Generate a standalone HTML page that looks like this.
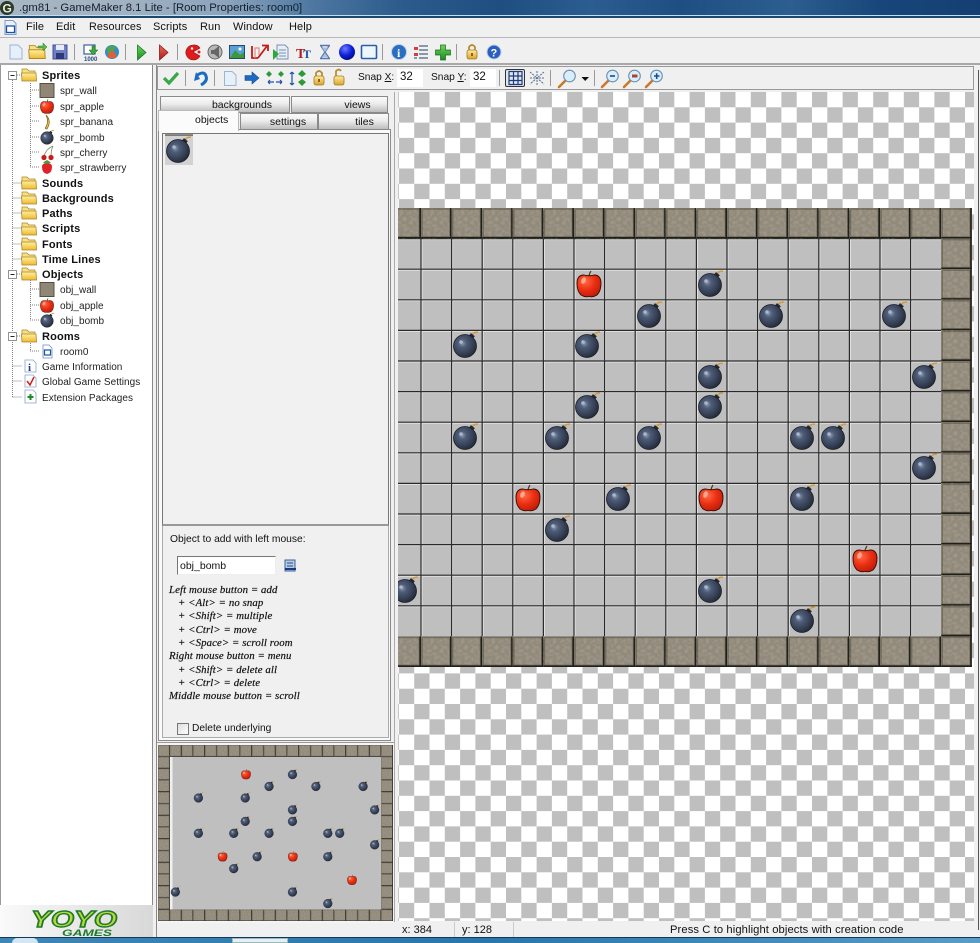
<!DOCTYPE html>
<html><head><meta charset="utf-8"><style>
html,body{margin:0;padding:0;background:#f0f0f0;overflow:hidden}
body{width:980px;height:943px;position:relative;font-family:"Liberation Sans",sans-serif;color:#111}
div,span.t{position:absolute}
.t{white-space:nowrap;font-size:11px;line-height:14px;transform:translateY(-7px)}
.m{font-size:11px;letter-spacing:.1px}
.s{font-family:"Liberation Serif",serif;font-style:italic;font-size:10.8px;letter-spacing:.1px;color:#111;-webkit-text-stroke:.2px #111;margin-top:1px}
.tab{box-sizing:border-box;border:1px solid #8a8a8a;background:linear-gradient(#fafafa,#ececec 45%,#bdbdbd);font-size:10.5px;text-align:center}
svg{position:absolute;left:0;top:0}
</style></head><body>
<div style="left:0;top:0;width:980px;height:17px;background:linear-gradient(90deg,#a9b6c3 0,#a3b2c2 120px,#8ba3bb 230px,#4f78a2 310px,#2c5b8c 400px,#1f4e80 500px,#2c5d90 590px,#1f4f82 680px,#2d5e90 790px,#18467a 880px,#153f73 980px)"></div>
<div style="left:0;top:15px;width:980px;height:1px;background:#bfe0f4"></div>
<div style="left:0;top:16px;width:980px;height:2px;background:#20466e"></div>
<span class="t" style="left:19px;top:8px;font-size:11.3px;color:#10202f">.gm81 - GameMaker 8.1 Lite - [Room Properties: room0]</span>
<div style="left:0;top:37px;width:980px;height:1px;background:#b8b8b8"></div>
<div style="left:0;top:63px;width:980px;height:2px;background:#a8a8a8"></div>
<span class="t m" style="left:26px;top:27px">File</span>
<span class="t m" style="left:56px;top:27px">Edit</span>
<span class="t m" style="left:89px;top:27px;font-size:10.8px">Resources</span>
<span class="t m" style="left:153px;top:27px">Scripts</span>
<span class="t m" style="left:200px;top:27px">Run</span>
<span class="t m" style="left:233px;top:27px">Window</span>
<span class="t m" style="left:289px;top:27px">Help</span>

<div style="left:0;top:65px;width:152px;height:840px;background:#fff;border-right:1px solid #888;box-shadow:inset 1px 0 0 #999"></div>
<div style="left:0;top:905px;width:153px;height:32px;background:linear-gradient(90deg,#fafafa,#d8d8d8)"></div>
<div style="left:156px;top:65px;width:1px;height:872px;background:#888"></div>
<div style="left:157px;top:66px;width:817px;height:24px;box-sizing:border-box;border:1px solid #999;background:#f0f0f0"></div>
<div style="left:397px;top:69px;width:26px;height:18px;background:#fff"></div>
<div style="left:470px;top:69px;width:26px;height:18px;background:#fff"></div>
<div style="left:505px;top:69px;width:20px;height:18px;box-sizing:border-box;border:1px solid #333;border-radius:2px;background:#dfe6ee"></div>
<span class="t" style="left:358px;top:78px;font-size:10.2px">Snap <u>X</u>:</span>
<span class="t" style="left:431px;top:78px;font-size:10.2px">Snap <u>Y</u>:</span>
<span class="t" style="left:400px;top:77px;font-size:11.5px">32</span>
<span class="t" style="left:473px;top:77px;font-size:11.5px">32</span>

<div class="tab" style="left:160px;top:96px;width:130px;height:17px;line-height:16px;padding-left:34px">backgrounds</div>
<div class="tab" style="left:291px;top:96px;width:97px;height:17px;line-height:16px;padding-left:36px">views</div>
<div class="tab" style="left:240px;top:113px;width:78px;height:17px;line-height:17px;padding-left:18px">settings</div>
<div class="tab" style="left:318px;top:113px;width:71px;height:17px;line-height:17px;padding-left:22px">tiles</div>
<div style="left:158px;top:129px;width:233px;height:612px;box-sizing:border-box;border:1px solid #8a8a8a;background:#fafafa"></div>
<div style="left:158px;top:110px;width:81px;height:21px;box-sizing:border-box;border:1px solid #bbb;border-bottom:0;background:#fbfbfb;font-size:10.5px;line-height:19px;padding-left:36px">objects</div>
<div style="left:162px;top:133px;width:227px;height:393px;box-sizing:border-box;border:1px solid #777;border-bottom:2px solid #999;background:#f1f1f1"></div>
<div style="left:162px;top:526px;width:227px;height:212px;box-sizing:border-box;border:1px solid #aaa;border-top:0;background:#f0f0f0"></div>
<div style="left:165px;top:135px;width:28px;height:30px;background:#d2d2d2"></div>

<span class="t" style="left:170px;top:540px;font-size:10.3px">Object to add with left mouse:</span>
<div style="left:177px;top:556px;width:99px;height:19px;box-sizing:border-box;border:1px solid #999;border-color:#777 #eee #eee #777;background:#fff;font-size:10.5px;line-height:19px;padding-left:2px">obj_bomb</div>
<span class="t s" style="left:169px;top:589px">Left mouse button = add</span>
<span class="t s" style="left:178px;top:602px">+ &lt;Alt&gt; = no snap</span>
<span class="t s" style="left:178px;top:615px">+ &lt;Shift&gt; = multiple</span>
<span class="t s" style="left:178px;top:629px">+ &lt;Ctrl&gt; = move</span>
<span class="t s" style="left:178px;top:642px">+ &lt;Space&gt; = scroll room</span>
<span class="t s" style="left:169px;top:655px">Right mouse button = menu</span>
<span class="t s" style="left:178px;top:669px">+ &lt;Shift&gt; = delete all</span>
<span class="t s" style="left:178px;top:682px">+ &lt;Ctrl&gt; = delete</span>
<span class="t s" style="left:169px;top:695px">Middle mouse button = scroll</span>
<div style="left:177px;top:723px;width:12px;height:12px;box-sizing:border-box;border:1px solid #777;background:linear-gradient(135deg,#ddd,#fff)"></div>
<span class="t" style="left:192px;top:729px;font-size:10.2px">Delete underlying</span>

<div style="left:157px;top:742px;width:237px;height:180px;background:#f4f4f4;border-top:1px solid #999"></div>
<div style="left:974px;top:65px;width:6px;height:872px;background:#f0f0f0"></div>
<div style="left:978px;top:70px;width:1px;height:860px;background:#555"></div>
<div style="left:394px;top:92px;width:1px;height:830px;background:#aaa"></div>
<span class="t" style="left:402px;top:930px;font-size:11px">x: 384</span>
<span class="t" style="left:462px;top:930px;font-size:11px">y: 128</span>
<span class="t" style="left:670px;top:930px;font-size:11.2px;letter-spacing:.1px">Press C to highlight objects with creation code</span>
<div style="left:454px;top:922px;width:1px;height:15px;background:#ccc"></div>
<div style="left:513px;top:922px;width:1px;height:15px;background:#ccc"></div>
<div style="left:0;top:937px;width:980px;height:6px;background:linear-gradient(90deg,#3f86b4,#2a76a8 50%,#5a9cc4)"></div>
<div style="left:0;top:937px;width:980px;height:1px;background:#10395c"></div>
<div style="left:232px;top:938px;width:56px;height:5px;background:#e8eef3;border:1px solid #9bb;box-sizing:border-box"></div>
<div style="left:12px;top:938px;width:26px;height:5px;background:#d4e6f2;border-radius:13px 13px 0 0"></div>

<svg width="980" height="943" viewBox="0 0 980 943" xmlns="http://www.w3.org/2000/svg">
<defs>
<pattern id="chk" patternUnits="userSpaceOnUse" x="383.6" y="92" width="30.6" height="30.6">
<rect width="30.6" height="30.6" fill="#fff"/><rect width="15.3" height="15.3" fill="#bfbfbf"/><rect x="15.3" y="15.3" width="15.3" height="15.3" fill="#bfbfbf"/>
</pattern>
<filter id="mott" x="0" y="0" width="100%" height="100%"><feTurbulence type="fractalNoise" baseFrequency=".3" numOctaves="2" seed="4"/><feColorMatrix values="0 0 0 0 .36  0 0 0 0 .33  0 0 0 0 .27  2.2 0 0 0 -.85"/></filter>
<radialGradient id="bg" cx=".38" cy=".38" r=".7"><stop offset="0" stop-color="#8c9bb2"/><stop offset=".25" stop-color="#4f5d78"/><stop offset=".7" stop-color="#333d52"/><stop offset="1" stop-color="#20262f"/></radialGradient>
<radialGradient id="ag" cx=".35" cy=".3" r=".8"><stop offset="0" stop-color="#ff6a44"/><stop offset=".5" stop-color="#ea2f12"/><stop offset="1" stop-color="#b81a08"/></radialGradient>
<radialGradient id="ball" cx=".38" cy=".3" r=".75"><stop offset="0" stop-color="#6e7cff"/><stop offset=".55" stop-color="#0f22d8"/><stop offset="1" stop-color="#000a80"/></radialGradient>
<linearGradient id="fold" x1="0" y1="0" x2="0" y2="1"><stop offset="0" stop-color="#fff0a0"/><stop offset="1" stop-color="#eeb92e"/></linearGradient>
<linearGradient id="lock" x1="0" y1="0" x2="0" y2="1"><stop offset="0" stop-color="#ffeaa0"/><stop offset="1" stop-color="#dca32c"/></linearGradient>
<linearGradient id="g3" x1="0" y1="0" x2="0" y2="1"><stop offset="0" stop-color="#6fd45c"/><stop offset="1" stop-color="#1a8c22"/></linearGradient>
<linearGradient id="r3" x1="0" y1="0" x2="0" y2="1"><stop offset="0" stop-color="#f06a5a"/><stop offset="1" stop-color="#a81d1d"/></linearGradient>

<g id="bomb">
<path d="M6 -10.5 L9.5 -13.5 L13 -14" fill="none" stroke="#d59a3e" stroke-width="1.6"/>
<rect x="3.5" y="-12" width="5" height="5" transform="rotate(40 6 -9)" fill="#22262e"/>
<circle r="11.5" cy="0" fill="url(#bg)" stroke="#1c2027" stroke-width=".8"/>
<circle cx="-4" cy="-4" r="1.8" fill="#b9c6d8" opacity=".8"/>
</g>
<g id="apple">
<path d="M0 -9 Q.5 -12 2 -14" fill="none" stroke="#5a3a14" stroke-width="1.3"/>
<path d="M-5 -10 Q0 -8.500 5 -10 Q12 -10 12 -1.500 Q12 6 8 10 Q4 12.500 0 11.500 Q-4 12.500 -8 10 Q-12 6 -12 -1.500 Q-12 -10 -5 -10Z" fill="url(#ag)" stroke="#3a0a04" stroke-width=".9"/>
<ellipse cx="-5.5" cy="-4.5" rx="2.2" ry="3.4" transform="rotate(22 -5.5 -4.5)" fill="#ffb49c" opacity=".85"/>
</g>
<g id="wall">
<rect width="30.6" height="30.6" fill="#91897a"/>
<rect width="30.6" height="30.6" filter="url(#mott)"/>
<rect x="1" y="1" width="28" height="28" fill="none" stroke="#5b5648" stroke-width="1.600" opacity=".6"/>
<rect x="29" width="1.600" height="30.6" fill="#1f1f1c"/>
<rect y="29" width="30.6" height="1.600" fill="#1f1f1c"/>
</g>
<g id="walls">
<use href="#wall" x="0"/><use href="#wall" x="30.6"/><use href="#wall" x="61.2"/><use href="#wall" x="91.8"/><use href="#wall" x="122.4"/><use href="#wall" x="153"/><use href="#wall" x="183.6"/><use href="#wall" x="214.2"/><use href="#wall" x="244.8"/><use href="#wall" x="275.4"/><use href="#wall" x="306"/><use href="#wall" x="336.6"/><use href="#wall" x="367.2"/><use href="#wall" x="397.8"/><use href="#wall" x="428.4"/><use href="#wall" x="459"/><use href="#wall" x="489.6"/><use href="#wall" x="520.2"/><use href="#wall" x="550.8"/>
<use href="#wall" y="428.4"/><use href="#wall" x="30.6" y="428.4"/><use href="#wall" x="61.2" y="428.4"/><use href="#wall" x="91.8" y="428.4"/><use href="#wall" x="122.4" y="428.4"/><use href="#wall" x="153" y="428.4"/><use href="#wall" x="183.6" y="428.4"/><use href="#wall" x="214.2" y="428.4"/><use href="#wall" x="244.8" y="428.4"/><use href="#wall" x="275.4" y="428.4"/><use href="#wall" x="306" y="428.4"/><use href="#wall" x="336.6" y="428.4"/><use href="#wall" x="367.2" y="428.4"/><use href="#wall" x="397.8" y="428.4"/><use href="#wall" x="428.4" y="428.4"/><use href="#wall" x="459" y="428.4"/><use href="#wall" x="489.6" y="428.4"/><use href="#wall" x="520.2" y="428.4"/><use href="#wall" x="550.8" y="428.4"/>
<use href="#wall" x="550.8" y="30.6"/><use href="#wall" x="550.8" y="61.2"/><use href="#wall" x="550.8" y="91.8"/><use href="#wall" x="550.8" y="122.4"/><use href="#wall" x="550.8" y="153"/><use href="#wall" x="550.8" y="183.6"/><use href="#wall" x="550.8" y="214.2"/><use href="#wall" x="550.8" y="244.8"/><use href="#wall" x="550.8" y="275.4"/><use href="#wall" x="550.8" y="306"/><use href="#wall" x="550.8" y="336.6"/><use href="#wall" x="550.8" y="367.2"/><use href="#wall" x="550.8" y="397.8"/>
</g>
<g id="items">
<use href="#apple" x="589" y="285"/><use href="#apple" x="528" y="499"/><use href="#apple" x="711" y="499"/><use href="#apple" x="865" y="560"/>
<use href="#bomb" x="710" y="285"/><use href="#bomb" x="649" y="316"/><use href="#bomb" x="771" y="316"/><use href="#bomb" x="894" y="316"/><use href="#bomb" x="465" y="346"/><use href="#bomb" x="587" y="346"/><use href="#bomb" x="710" y="377"/><use href="#bomb" x="924" y="377"/><use href="#bomb" x="587" y="407"/><use href="#bomb" x="710" y="407"/><use href="#bomb" x="465" y="438"/><use href="#bomb" x="557" y="438"/><use href="#bomb" x="649" y="438"/><use href="#bomb" x="802" y="438"/><use href="#bomb" x="833" y="438"/><use href="#bomb" x="924" y="468"/><use href="#bomb" x="618" y="499"/><use href="#bomb" x="802" y="499"/><use href="#bomb" x="557" y="530"/><use href="#bomb" x="710" y="591"/><use href="#bomb" x="802" y="621"/><use href="#bomb" x="405" y="591"/>
</g>
<clipPath id="cv"><rect x="398" y="92" width="576" height="829"/></clipPath>
<clipPath id="mm"><rect x="158" y="745" width="235" height="176"/></clipPath>
<g id="folder"><path d="M-7 -6 L-2 -6 L0 -4 L6 -4 L6 -1 L-7 -1Z" fill="#f8e080" stroke="#a8842c" stroke-width=".7"/><path d="M-7.500 -2 L7 -2 L7.500 6 L-7 6Z" fill="url(#fold)" stroke="#a8842c" stroke-width=".8"/></g>
<g id="minus"><rect x="-4" y="-4" width="8" height="8" fill="#fff" stroke="#888" stroke-width=".9"/><path d="M-2 0H2" stroke="#222" stroke-width="1"/></g>
<g id="wicon"><rect x="-7" y="-7" width="14" height="14" fill="#8f8676" stroke="#55503f"/></g>
<g id="padlock"><path d="M-3 -2 V-5 Q0 -9 3 -5 V-2" fill="none" stroke="#b58a2c" stroke-width="1.7"/><rect x="-5" y="-2" width="10" height="9" rx="2" fill="url(#lock)" stroke="#a47a20" stroke-width=".8"/><rect x="-1" y="1" width="2" height="3" fill="#8a6414"/></g>
<g id="mag"><path d="M-8 9 L-2 3" stroke="#c9792b" stroke-width="2.6" stroke-linecap="round"/><circle cx="2.5" cy="-2" r="5.8" fill="#d8eefa" stroke="#6a8fb0" stroke-width="1.1"/></g>
</defs>

<!-- canvas -->
<rect x="398" y="92" width="576" height="829" fill="url(#chk)"/>
<g clip-path="url(#cv)">
<rect x="390.4" y="208" width="581.4" height="459" fill="#bfbfbf"/>
<path d="M422 238V637M452.600 238V637M483.200 238V637M513.800 238V637M544.400 238V637M575 238V637M605.600 238V637M636.200 238V637M666.800 238V637M697.400 238V637M728 238V637M758.600 238V637M789.200 238V637M819.800 238V637M850.400 238V637M881 238V637M911.600 238V637M398 239.600H941M398 270.200H941M398 300.800H941M398 331.400H941M398 362H941M398 392.600H941M398 423.200H941M398 453.800H941M398 484.400H941M398 515H941M398 545.600H941M398 576.200H941M398 606.800H941" fill="none" stroke="#e4e4e4" stroke-width="1"/>
<path d="M421 238V637M451.600 238V637M482.200 238V637M512.800 238V637M543.400 238V637M574 238V637M604.600 238V637M635.200 238V637M665.800 238V637M696.400 238V637M727 238V637M757.600 238V637M788.200 238V637M818.800 238V637M849.400 238V637M880 238V637M910.600 238V637M398 238.600H941M398 269.200H941M398 299.800H941M398 330.400H941M398 361H941M398 391.600H941M398 422.200H941M398 452.800H941M398 483.400H941M398 514H941M398 544.600H941M398 575.200H941M398 605.800H941" fill="none" stroke="#2a2a2a" stroke-width="1.200"/>
<use href="#walls" x="390.4" y="208"/>
<use href="#items"/>
</g>
<!-- minimap -->
<g clip-path="url(#mm)">
<rect x="158" y="745" width="235" height="176" fill="#bfbfbf"/>
<rect x="170" y="745" width="2.5" height="176" fill="#f0f0f0"/>
<g transform="translate(158 745) scale(.384)">
<use href="#walls" x="30.6"/><use href="#wall" y="0"/><use href="#wall" y="30.6"/><use href="#wall" y="61.2"/><use href="#wall" y="91.8"/><use href="#wall" y="122.4"/><use href="#wall" y="153"/><use href="#wall" y="183.6"/><use href="#wall" y="214.2"/><use href="#wall" y="244.8"/><use href="#wall" y="275.4"/><use href="#wall" y="306"/><use href="#wall" y="336.6"/><use href="#wall" y="367.2"/><use href="#wall" y="397.8"/><use href="#wall" y="428.4"/>
<use href="#items" transform="translate(-359.8 -208)"/>
</g></g>
<!-- list thumb -->
<use href="#bomb" x="178" y="151"/>
<path d="M165 135H193" stroke="#222" stroke-width="1"/>

<!-- tree lines -->
<g stroke="#808080" stroke-width="1" stroke-dasharray="1 1" fill="none">
<path d="M12.5 80V397M30.5 83V167M30.5 280V320M30.5 341V351M12.5 183H22M12.5 198H22M12.5 213H22M12.5 228H22M12.5 244H22M12.5 259H22M12.5 366H22M12.5 381H22M12.5 397H22M30 90H40M30 106H40M30 121H40M30 137H40M30 152H40M30 167H40M30 289H40M30 305H40M30 320H40M30 351H40M17 75H22M17 274H22M17 336H22"/>
</g>
<use href="#minus" x="12.5" y="75.5"/><use href="#minus" x="12.5" y="274.5"/><use href="#minus" x="12.5" y="336.5"/>
<use href="#folder" x="29" y="75"/><use href="#folder" x="29" y="183"/><use href="#folder" x="29" y="198"/><use href="#folder" x="29" y="213"/><use href="#folder" x="29" y="229"/><use href="#folder" x="29" y="244"/><use href="#folder" x="29" y="259"/><use href="#folder" x="29" y="274"/><use href="#folder" x="29" y="336"/>
<use href="#wicon" x="47" y="90.5"/><use href="#wicon" x="47" y="289.5"/>
<g transform="translate(47 107) scale(.55)"><use href="#apple"/></g>
<g transform="translate(47 306) scale(.55)"><use href="#apple"/></g>
<g transform="translate(47 138) scale(.55)"><use href="#bomb"/></g>
<g transform="translate(47 321) scale(.55)"><use href="#bomb"/></g>
<path d="M46 115 Q52 121 47 129 Q44 129 46 127 Q49 121 46 115Z" fill="#e9c54a" stroke="#7a5a10" stroke-width=".7"/>
<path d="M44 156Q46 149 53 146M51 156Q51 150 53 146" fill="none" stroke="#7a8a50" stroke-width=".8"/><circle cx="44" cy="157.500" r="2.600" fill="#c91d1d"/><circle cx="51" cy="157.500" r="2.600" fill="#c91d1d"/>
<path d="M47 174 Q42 173 42 167 Q42 163 47 163 Q52 163 52 167 Q52 173 47 174Z" fill="#e0222a"/><path d="M43 162.500 L47 164 L51 162.500 L47 160Z" fill="#4a9a3a"/>
<path d="M43 345H49L52 348V358H43Z" fill="#fff" stroke="#6f8fbf" stroke-width=".8"/><rect x="44.500" y="350" width="6" height="5" fill="#fff" stroke="#1d50a8" stroke-width="1.2"/>
<path d="M25 360H33L36 363V372H25Z" fill="#fff" stroke="#8aa3c4" stroke-width=".8"/><text x="28" y="371" font-family="Liberation Serif,serif" font-weight="bold" font-size="11" fill="#1a3aa0">i</text>
<path d="M25 375H33L36 378V387H25Z" fill="#fff" stroke="#8aa3c4" stroke-width=".8"/><path d="M27 381L30 385L34 377" fill="none" stroke="#d02020" stroke-width="1.500"/>
<path d="M25 390H33L36 393V403H25Z" fill="#fff" stroke="#8aa3c4" stroke-width=".8"/><path d="M30.500 394V400M27.500 397H33.500" stroke="#1a8c22" stroke-width="2"/>
<g font-family="Liberation Sans,sans-serif" font-size="10" fill="#222" letter-spacing=".02">
<text x="60" y="94">spr_wall</text><text x="60" y="110">spr_apple</text><text x="60" y="125">spr_banana</text><text x="60" y="141">spr_bomb</text><text x="60" y="156">spr_cherry</text><text x="60" y="171">spr_strawberry</text>
<text x="60" y="293">obj_wall</text><text x="60" y="309">obj_apple</text><text x="60" y="324">obj_bomb</text><text x="60" y="355">room0</text>
<text x="42" y="370">Game Information</text><text x="42" y="385">Global Game Settings</text><text x="42" y="401">Extension Packages</text>
</g>
<g font-family="Liberation Sans,sans-serif" font-size="11" font-weight="bold" fill="#111" letter-spacing=".15">
<text x="42" y="79">Sprites</text><text x="42" y="187">Sounds</text><text x="42" y="202">Backgrounds</text><text x="42" y="217">Paths</text><text x="42" y="232">Scripts</text><text x="42" y="248">Fonts</text><text x="42" y="263">Time Lines</text><text x="42" y="278">Objects</text><text x="42" y="340">Rooms</text>
</g>

<!-- title icon -->
<circle cx="7" cy="8" r="7" fill="#2c3a2c"/><text x="2.500" y="12.500" font-family="Liberation Sans,sans-serif" font-weight="bold" font-size="12" fill="#e8f0d8">G</text>
<path d="M5 20.500H13L16 23.500V34.500H5Z" fill="#e8f0fa" stroke="#7c9cc4"/><rect x="6.500" y="26" width="8" height="6.500" fill="#fff" stroke="#1d50a8" stroke-width="1.300"/>

<!-- main toolbar -->
<path d="M10 45H18L22 49V59H10Z" fill="#e6f0fb" stroke="#9db5d2"/>
<use href="#folder" transform="translate(37 52) scale(1.100)"/><path d="M38 46L43 46V43L47 47L43 51V48H38Z" fill="#5cb84a" stroke="#2a7a22" stroke-width=".5"/>
<path d="M53 45H67V59H53Z" fill="#6c7fc8" stroke="#444f8c"/><rect x="56" y="45" width="8" height="5" fill="#e8ecf8"/><rect x="56" y="53" width="8" height="6" fill="#2e3a78"/>
<rect x="74" y="44" width="1" height="16" fill="#999"/>
<rect x="84" y="45" width="11" height="9" fill="#fff" stroke="#3a5f9a" stroke-width="1.200"/><path d="M92 46V50H89L93 55L98 50H95V46Z" fill="#3aa83a" stroke="#1c6a1c" stroke-width=".5"/><text x="84" y="61" font-family="Liberation Sans,sans-serif" font-size="6" font-weight="bold" fill="#2a4a7a">1000</text>
<circle cx="112" cy="52" r="7" fill="#3a8ac4"/><path d="M107 48Q112 44 116 47L113 52L108 53Z" fill="#4aa84a"/><path d="M108 54L112 50L116 54V58H108Z" fill="#d8623a"/>
<rect x="125" y="44" width="1" height="16" fill="#999"/>
<path d="M137.500 45L146 52.500L137.500 60Z" fill="url(#g3)" stroke="#1a7a22" stroke-width=".8"/>
<path d="M159.500 45L168 52.500L159.500 60Z" fill="url(#r3)" stroke="#8a1a1a" stroke-width=".8"/>
<rect x="177" y="44" width="1" height="16" fill="#999"/>
<path d="M193 45A7.500 7.500 0 1 0 200 56L193 52L200 48A7.500 7.500 0 0 0 193 45Z" fill="#e11b1b" stroke="#8a0f0f" stroke-width=".6"/><circle cx="199" cy="52" r="1.500" fill="#e11b1b"/><circle cx="192" cy="48.500" r="1.200" fill="#fff"/>
<circle cx="215" cy="52" r="7" fill="#b8b8b8" stroke="#666"/><path d="M211 50H214L219 46V58L214 54H211Z" fill="#666"/>
<rect x="229.500" y="45.500" width="15" height="13" fill="#5aa0d8" stroke="#2a4a6a"/><path d="M230 58L235 50L240 55L244 52V58Z" fill="#3a9a3a"/><circle cx="240" cy="49" r="1.500" fill="#fff"/>
<path d="M252 46V58H258M258 58L267 46M262 45.500H268V51" fill="none" stroke="#c41c1c" stroke-width="1.800"/><path d="M255 58V48H259V55" fill="none" stroke="#e08a8a" stroke-width="1.200"/>
<path d="M277 45H285L288 48V59H277Z" fill="#e8eef6" stroke="#7d8fb0"/><path d="M279 50H286M279 53H286M279 56H286" stroke="#7d8fb0"/><path d="M273 49L279 54L273 60Z" fill="#2aa83a"/>
<text x="296" y="58" font-family="Liberation Serif,serif" font-weight="bold" font-size="14" fill="#b01c1c">T</text><text x="303" y="58" font-family="Liberation Serif,serif" font-weight="bold" font-size="12" fill="#1d50a8">T</text>
<path d="M320 45.500H330M320 58.500H330M321 46L329 58M329 46L321 58" fill="none" stroke="#5a78b0" stroke-width="1.400"/><path d="M322 47.500H328L325 52Z M325 53L328 57H322Z" fill="#a8c0e0"/>
<circle cx="347" cy="52" r="8" fill="url(#ball)"/>
<rect x="361.500" y="45.500" width="15" height="13" rx="1" fill="#eef6fd" stroke="#2a5ea8" stroke-width="1.600"/>
<rect x="382" y="44" width="1" height="16" fill="#999"/>
<circle cx="399" cy="52" r="7.500" fill="#2a6ec0" stroke="#bcd0e8"/><text x="397" y="57" font-family="Liberation Serif,serif" font-weight="bold" font-size="12" fill="#fff">i</text>
<path d="M414 47H418V50H414ZM414 53H418V56H414Z" fill="#d04040"/><path d="M419 46H428M419 50H428M419 54H428M419 58H428M414 58H417" stroke="#7a8aa0" stroke-width="1.800"/>
<path d="M440.500 45H445.500V50H450.500V55H445.500V60H440.500V55H435.500V50H440.500Z" fill="url(#g3)" stroke="#1c6a1c" stroke-width=".7"/>
<rect x="456" y="44" width="1" height="16" fill="#999"/>
<use href="#padlock" x="472" y="52"/>
<circle cx="494" cy="52" r="7" fill="#2a5fc0" stroke="#bcd0e8"/><text x="490.500" y="56.500" font-family="Liberation Sans,sans-serif" font-weight="bold" font-size="11" fill="#fff">?</text>

<!-- second toolbar -->
<path d="M164 78L169 83L178 73" fill="none" stroke="#3aa84a" stroke-width="3.200"/>
<rect x="185" y="70" width="1" height="16" fill="#999"/>
<path d="M196 72L194 81L200 79" fill="#1d6ac0"/><path d="M196 76Q204 70 206 76Q208 81 201 85" fill="none" stroke="#1d6ac0" stroke-width="3"/>
<rect x="214" y="70" width="1" height="16" fill="#999"/>
<path d="M224.500 71.500H232L236 75V85.500H224.500Z" fill="#e6f0fb" stroke="#9db5d2"/>
<path d="M245 75.500H252V72L259 78L252 84V80.500H245Z" fill="#1d6ac0" stroke="#134a90" stroke-width=".6"/>
<path d="M269 71L272 74L269 77L266 74ZM281 71L284 74L281 77L278 74Z" fill="#2a9a3a"/><path d="M268 82H274M276 82H282M268 82L270 80M268 82L270 84M282 82L280 80M282 82L280 84" stroke="#1d50a8" stroke-width="1.200" fill="none"/>
<path d="M302 70L306 74L302 77L298 74ZM302 79L306 82L302 86L298 82Z" fill="#2a9a3a"/><path d="M292 72V85M292 72L290 74M292 72L294 74M292 85L290 83M292 85L294 83" stroke="#1d50a8" stroke-width="1.200" fill="none"/>
<use href="#padlock" x="319" y="78"/><g transform="translate(339 78)"><path d="M-3 -2 V-7 Q0 -10 2 -7" fill="none" stroke="#b58a2c" stroke-width="1.700"/><rect x="-5" y="-2" width="10" height="9" rx="2" fill="url(#lock)" stroke="#a47a20" stroke-width=".8"/></g>
<rect x="499" y="70" width="1" height="16" fill="#999"/>
<path d="M508.500 71.500H522M508.500 76H522M508.500 80.500H522M508.500 84.500H522M509 71V85M513.500 71V85M518 71V85M522 71V85" stroke="#1d3a7a" stroke-width="1.200" fill="none"/>
<path d="M530 72L544 84M544 72L530 84M530 78H544M537 71V85" stroke="#55708f" stroke-width="1" stroke-dasharray="2 1" fill="none"/>
<rect x="550" y="70" width="1" height="16" fill="#999"/>
<use href="#mag" x="567" y="78"/>
<path d="M581.500 77H589L585.200 81Z" fill="#111"/>
<rect x="594" y="70" width="1" height="16" fill="#999"/>
<use href="#mag" x="610" y="78"/><path d="M610 76H615" stroke="#1d4a90" stroke-width="1.600"/>
<use href="#mag" x="632" y="78"/><rect x="632" y="74.500" width="5.500" height="3" fill="#b04030"/>
<use href="#mag" x="654" y="78"/><path d="M654 76H659.500M656.700 73.200V79" stroke="#1d4a90" stroke-width="1.600"/>

<!-- object picker icon -->
<path d="M285 560H295V571H285Z" fill="#b8cce4" stroke="#3a5f9a"/><path d="M287 563H293M287 566H293" stroke="#2a4a80"/><path d="M285 569H296" stroke="#1d3a7a" stroke-width="2"/>

<!-- logo -->
<g font-family="Liberation Sans,sans-serif" font-weight="bold" font-style="italic">
<text x="31" y="927" font-size="23" textLength="86" lengthAdjust="spacingAndGlyphs" fill="#b9d83a" stroke="#1d7a2a" stroke-width="1.400">YOYO</text>
<text x="62" y="936" font-size="9" fill="#1d7a2a" textLength="50" lengthAdjust="spacingAndGlyphs">GAMES</text>
</g>
</svg>
</body></html>
